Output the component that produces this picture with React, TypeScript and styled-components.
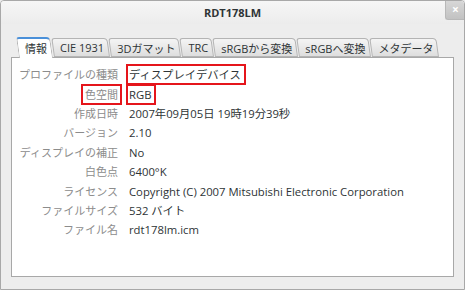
import React from 'react'
import styled, { createGlobalStyle } from 'styled-components'

const Global = createGlobalStyle`
  html, body { margin: 0; padding: 0; background: #ededed; }
  body { font-family: "Open Sans", "Noto Sans CJK JP", sans-serif; }
`

const Window = styled.div`
  width: 465px;
  height: 290px;
  box-sizing: border-box;
  border: 1px solid #a8a8a8;
  border-radius: 4px 4px 0 0;
  background: #ededed;
  display: flex;
  flex-direction: column;
  overflow: hidden;
`

const TitleBar = styled.div`
  position: relative;
  height: 23px;
  display: flex;
  align-items: center;
  justify-content: center;
  background: linear-gradient(#f6f6f6, #ececec);
  font-size: 11px;
  font-weight: bold;
  color: #2e3436;
`

const CloseButton = styled.div`
  position: absolute;
  top: -1px;
  right: -1px;
  width: 19px;
  height: 19px;
  background: linear-gradient(#d8d8d8, #c2c2c2);
  border-left: 1px solid #b8b8b8;
  border-bottom: 1px solid #b8b8b8;
  border-radius: 0 4px 0 3px;
  color: #fff;
  font-size: 12px;
  font-weight: bold;
  display: flex;
  align-items: center;
  justify-content: center;
`

const Body = styled.div`
  flex: 1;
  padding: 12px 10px 12px 10px;
  display: flex;
  flex-direction: column;
`

const TabStrip = styled.div`
  display: flex;
  align-items: flex-end;
  padding-left: 8px;
  height: 21px;
  position: relative;
  z-index: 1;
`

const Tab = styled.div<{ $active?: boolean }>`
  position: relative;
  height: ${(p) => (p.$active ? 21 : 19)}px;
  padding: 0 7px 0 6px;
  margin-bottom: ${(p) => (p.$active ? -1 : 0)}px;
  display: flex;
  align-items: center;
  font-size: 11px;
  color: #2e3436;
  white-space: nowrap;
  &::before {
    content: '';
    position: absolute;
    inset: 0 1px 0 0;
    z-index: -1;
    transform: skewX(8deg);
    transform-origin: bottom left;
    border: 1px solid #b4b4b4;
    border-bottom: ${(p) => (p.$active ? 'none' : '1px solid #b4b4b4')};
    border-top: ${(p) => (p.$active ? '2px solid #4a90d9' : '1px solid #b4b4b4')};
    border-radius: 3px 4px 0 0;
    background: ${(p) => (p.$active ? '#ffffff' : 'linear-gradient(#f4f4f4, #dedede)')};
  }
`

const Panel = styled.div`
  flex: 1;
  background: #fff;
  border: 1px solid #a8a8a8;
  padding: 7px 0 0 0;
  display: grid;
  grid-template-columns: 107px 1fr;
  column-gap: 10px;
  grid-auto-rows: 19.4px;
  align-content: start;
`

const Label = styled.div<{ $marked?: boolean }>`
  justify-self: end;
  align-self: center;
  font-size: 11px;
  color: #8c8c8c;
  line-height: 15px;
  white-space: nowrap;
  outline: ${(p) => (p.$marked ? '2px solid #e5151b' : 'none')};
  outline-offset: 1px;
  padding: 0 1px;
`

const Value = styled.div<{ $marked?: boolean }>`
  justify-self: start;
  align-self: center;
  font-size: 11.3px;
  color: #2e3436;
  line-height: 15px;
  white-space: nowrap;
  outline: ${(p) => (p.$marked ? '2px solid #e5151b' : 'none')};
  outline-offset: 1px;
  padding: 0 2px 0 0;
`

const tabs = ['情報', 'CIE 1931', '3Dガマット', 'TRC', 'sRGBから変換', 'sRGBへ変換', 'メタデータ']

const rows: { label: string; value: string; markLabel?: boolean; markValue?: boolean }[] = [
  { label: 'プロファイルの種類', value: 'ディスプレイデバイス', markValue: true },
  { label: '色空間', value: 'RGB', markLabel: true, markValue: true },
  { label: '作成日時', value: '2007年09月05日 19時19分39秒' },
  { label: 'バージョン', value: '2.10' },
  { label: 'ディスプレイの補正', value: 'No' },
  { label: '白色点', value: '6400°K' },
  { label: 'ライセンス', value: 'Copyright (C) 2007 Mitsubishi Electronic Corporation' },
  { label: 'ファイルサイズ', value: '532 バイト' },
  { label: 'ファイル名', value: 'rdt178lm.icm' },
]

export default function App() {
  return (
    <>
      <Global />
      <Window>
        <TitleBar>
          RDT178LM
          <CloseButton>×</CloseButton>
        </TitleBar>
        <Body>
          <TabStrip>
            {tabs.map((t, i) => (
              <Tab key={t} $active={i === 0}>
                {t}
              </Tab>
            ))}
          </TabStrip>
          <Panel>
            {rows.map((r) => (
              <React.Fragment key={r.label}>
                <Label $marked={r.markLabel}>{r.label}</Label>
                <Value $marked={r.markValue}>{r.value}</Value>
              </React.Fragment>
            ))}
          </Panel>
        </Body>
      </Window>
    </>
  )
}
